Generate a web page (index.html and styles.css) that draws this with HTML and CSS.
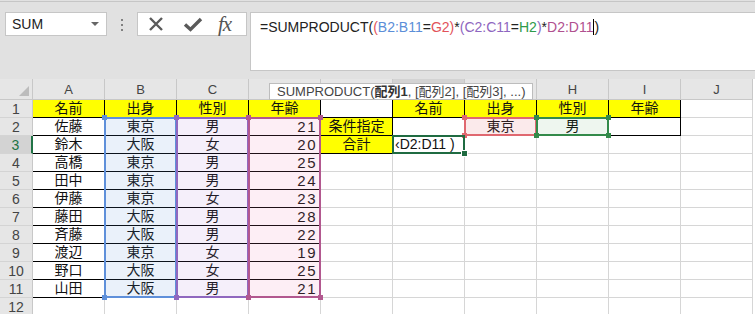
FILE: index.html
```html
<!DOCTYPE html>
<html lang="ja">
<head>
    <meta charset="UTF-8">
    <title>SUMPRODUCT</title>
    <link rel="stylesheet" href="styles.css">
</head>
<body>

    <!-- 数式バー -->
    <div class="toolbar">
        <div class="namebox"><span>SUM</span><span class="caret"></span></div>
        <div class="grip"><i></i><i></i><i></i></div>
        <div class="btns">
            <svg class="ico" width="18" height="18" viewBox="0 0 18 18"><path d="M3 3 L15 15 M15 3 L3 15" stroke="#5a5a5a" stroke-width="2.4" fill="none"/></svg>
            <svg class="ico ok" width="20" height="18" viewBox="0 0 20 18"><path d="M2 9.5 L7.5 14.5 L18 4" stroke="#5a5a5a" stroke-width="3.4" fill="none"/></svg>
            <span class="fx">fx</span>
        </div>
        <div class="formula">=SUMPRODUCT(<span class="red">(</span><span class="blue">B2:B11</span>=<span class="red">G2)</span>*<span class="purple">(C2:C11</span>=<span class="green">H2</span><span class="purple">)</span>*<span class="pink">D2:D11</span><span class="cursor">)</span></div>
    </div>

    <!-- シート -->
    <div class="sheet">
        <div class="grid">
            <div class="hd corner"><span class="tri"></span></div>
            <div class="hd">A</div><div class="hd">B</div><div class="hd">C</div><div class="hd">D</div><div class="hd">E</div>
            <div class="hd on">F</div><div class="hd">G</div><div class="hd">H</div><div class="hd">I</div><div class="hd">J</div>

            <div class="rh">1</div>
            <div class="c y k">名前</div><div class="c y k">出身</div><div class="c y k">性別</div><div class="c y k">年齢</div>
            <div class="c k"></div>
            <div class="c y k">名前</div><div class="c y k">出身</div><div class="c y k">性別</div><div class="c y k">年齢</div><div class="c"></div>

            <div class="rh">2</div>
            <div class="c k">佐藤</div><div class="c k">東京</div><div class="c k">男</div><div class="c k n">21</div>
            <div class="c y k">条件指定</div>
            <div class="c k"></div><div class="c k">東京</div><div class="c k">男</div><div class="c k"></div><div class="c"></div>

            <div class="rh on">3</div>
            <div class="c k">鈴木</div><div class="c k">大阪</div><div class="c k">女</div><div class="c k n">20</div>
            <div class="c y k">合計</div>
            <div class="c l">‹D2:D11 )</div><div class="c"></div><div class="c"></div><div class="c"></div><div class="c"></div>

            <div class="rh">4</div>
            <div class="c k">高橋</div><div class="c k">東京</div><div class="c k">男</div><div class="c k n">25</div>
            <div class="c"></div><div class="c"></div><div class="c"></div><div class="c"></div><div class="c"></div><div class="c"></div>

            <div class="rh">5</div>
            <div class="c k">田中</div><div class="c k">東京</div><div class="c k">男</div><div class="c k n">24</div>
            <div class="c"></div><div class="c"></div><div class="c"></div><div class="c"></div><div class="c"></div><div class="c"></div>

            <div class="rh">6</div>
            <div class="c k">伊藤</div><div class="c k">東京</div><div class="c k">女</div><div class="c k n">23</div>
            <div class="c"></div><div class="c"></div><div class="c"></div><div class="c"></div><div class="c"></div><div class="c"></div>

            <div class="rh">7</div>
            <div class="c k">藤田</div><div class="c k">大阪</div><div class="c k">男</div><div class="c k n">28</div>
            <div class="c"></div><div class="c"></div><div class="c"></div><div class="c"></div><div class="c"></div><div class="c"></div>

            <div class="rh">8</div>
            <div class="c k">斉藤</div><div class="c k">大阪</div><div class="c k">男</div><div class="c k n">22</div>
            <div class="c"></div><div class="c"></div><div class="c"></div><div class="c"></div><div class="c"></div><div class="c"></div>

            <div class="rh">9</div>
            <div class="c k">渡辺</div><div class="c k">東京</div><div class="c k">女</div><div class="c k n">19</div>
            <div class="c"></div><div class="c"></div><div class="c"></div><div class="c"></div><div class="c"></div><div class="c"></div>

            <div class="rh">10</div>
            <div class="c k">野口</div><div class="c k">大阪</div><div class="c k">女</div><div class="c k n">25</div>
            <div class="c"></div><div class="c"></div><div class="c"></div><div class="c"></div><div class="c"></div><div class="c"></div>

            <div class="rh">11</div>
            <div class="c k">山田</div><div class="c k">大阪</div><div class="c k">男</div><div class="c k n">21</div>
            <div class="c"></div><div class="c"></div><div class="c"></div><div class="c"></div><div class="c"></div><div class="c"></div>

            <div class="rh">12</div>
            <div class="c"></div><div class="c"></div><div class="c"></div><div class="c"></div><div class="c"></div>
            <div class="c"></div><div class="c"></div><div class="c"></div><div class="c"></div><div class="c"></div>
        </div>

        <!-- 参照範囲の色枠（セルの上に重ねる） -->
        <div class="grid marks">
            <div class="rng r-blue"><i class="tl"></i><i class="tr"></i><i class="bl"></i><i class="br"></i></div>
            <div class="rng r-purple"><i class="tl"></i><i class="tr"></i><i class="bl"></i><i class="br"></i></div>
            <div class="rng r-pink"><i class="tl"></i><i class="tr"></i><i class="bl"></i><i class="br"></i></div>
            <div class="rng r-red"><i class="tl"></i><i class="tr"></i><i class="bl"></i><i class="br"></i></div>
            <div class="rng r-green"><i class="tl"></i><i class="tr"></i><i class="bl"></i><i class="br"></i></div>
            <div class="active"><i class="br"></i></div>
        </div>

        <!-- 関数ヒント -->
        <div class="tip">SUMPRODUCT(<b>配列1</b>, [配列2], [配列3], ...)</div>
    </div>

</body>
</html>
```

FILE: styles.css
```css
/* 基本 */
html, body {
    margin: 0;
    padding: 0;
    height: 314px;
    overflow: hidden;
    background: #e1e1e1;
    font-family: "Liberation Sans", "Noto Sans CJK JP", sans-serif;
    color: #222;
}

/* 数式バー */
.toolbar {
    display: flex;
    align-items: flex-start;
    margin-top: 1px;
    border-top: 1px solid #c6c6c6;
    padding: 10px 0 8px 5px;
}
.namebox {
    width: 102px;
    height: 24px;
    box-sizing: border-box;
    background: #fff;
    border: 1px solid #c6c6c6;
    display: flex;
    align-items: center;
    justify-content: space-between;
    padding: 0 7px 0 6px;
    font-size: 14px;
}
.caret {
    width: 0;
    height: 0;
    border-left: 4px solid transparent;
    border-right: 4px solid transparent;
    border-top: 4px solid #666;
}
.grip {
    display: flex;
    flex-direction: column;
    gap: 3px;
    width: 2px;
    margin: 7px 14px 0 14px;
}
.grip i {
    display: block;
    width: 2px;
    height: 2px;
    background: #808080;
}
.btns {
    width: 110px;
    height: 24px;
    box-sizing: border-box;
    background: #fff;
    border: 1px solid #c6c6c6;
    display: flex;
    align-items: center;
    padding-left: 9px;
}
.ico { display: block; }
.ok { margin-left: 18px; }
.fx {
    margin-left: 15px;
    font-family: "Liberation Serif", serif;
    font-style: italic;
    font-size: 21px;
    line-height: 20px;
    color: #555;
    letter-spacing: -1px;
}
.formula {
    flex: 1;
    height: 59px;
    box-sizing: border-box;
    margin-left: 3px;
    margin-right: -2px;
    background: #fff;
    border: 1px solid #c6c6c6;
    padding: 4px 9px;
    font-size: 14px;
    line-height: 20px;
    white-space: nowrap;
}
.red { color: #e2535a; }
.blue { color: #5b8ed8; }
.purple { color: #8e66c0; }
.green { color: #2e9a4a; }
.pink { color: #b0508f; }
.cursor { border-left: 1px solid #000; }

/* シート */
.sheet {
    position: relative;
}
.grid {
    display: grid;
    grid-template-columns: 33px repeat(10, 72px);
    grid-template-rows: 21px repeat(12, 18px);
    background: #fff;
}
.marks {
    position: absolute;
    left: 0;
    top: 0;
    background: transparent;
}
.hd, .rh {
    box-sizing: border-box;
    background: #e6e6e6;
    color: #444;
    display: flex;
    align-items: center;
    justify-content: center;
    border-right: 1px solid #c8c8c8;
    border-bottom: 1px solid #c8c8c8;
}
.hd { font-size: 13px; }
.rh {
    font-size: 14px;
    border-bottom-color: #d4d4d4;
}
.hd.on {
    background: #d3d3d3;
    border-bottom: 2px solid #217346;
}
.rh.on {
    background: #d3d3d3;
    color: #217346;
    border-right: 2px solid #217346;
}
.corner {
    justify-content: flex-end;
    align-items: flex-end;
    padding: 0 3px 3px 0;
}
.tri {
    width: 0;
    height: 0;
    border-left: 10px solid transparent;
    border-bottom: 10px solid #bcbcbc;
}

/* セル */
.c {
    box-sizing: border-box;
    border-right: 1px solid #d6d6d6;
    border-bottom: 1px solid #d6d6d6;
    display: flex;
    align-items: center;
    justify-content: center;
    font-size: 14px;
    line-height: 17px;
    color: #111;
    white-space: nowrap;
    overflow: hidden;
}
.c.k {
    border-right-color: #000;
    border-bottom-color: #000;
}
.c.y { background: #ffff00; }
.c.n {
    justify-content: flex-end;
    padding-right: 3px;
    font-size: 15px;
    letter-spacing: 1.5px;
}
.c.l {
    justify-content: flex-start;
    padding-left: 2px;
    font-size: 14px;
}

/* 参照範囲 */
.rng, .active {
    position: relative;
    margin: -1px 0 0 -1px;
    border: 2px solid;
}
.rng i, .active i {
    position: absolute;
    width: 5px;
    height: 5px;
    background: currentColor;
}
.tl { left: -4px; top: -4px; }
.tr { right: -4px; top: -4px; }
.bl { left: -4px; bottom: -4px; }
.br { right: -4px; bottom: -4px; }
.r-blue {
    grid-column: 3;
    grid-row: 3 / 13;
    color: #5f90da;
    border-color: #5f90da;
    background: rgba(95, 144, 218, 0.13);
}
.r-purple {
    grid-column: 4;
    grid-row: 3 / 13;
    color: #9068bf;
    border-color: #9068bf;
    background: rgba(160, 110, 210, 0.11);
}
.r-pink {
    grid-column: 5;
    grid-row: 3 / 13;
    color: #b2588f;
    border-color: #b2588f;
    background: rgba(240, 120, 180, 0.13);
}
.r-red {
    grid-column: 8;
    grid-row: 3;
    color: #e06870;
    border-color: #e06870;
    background: rgba(224, 104, 112, 0.14);
}
.r-green {
    grid-column: 9;
    grid-row: 3;
    color: #338a4a;
    border-color: #338a4a;
    background: rgba(70, 150, 80, 0.09);
}
.active {
    grid-column: 7;
    grid-row: 4;
    color: #1f6b41;
    border-color: #1f6b41;
}
.active i { outline: 1px solid #fff; }

/* 関数ヒント */
.tip {
    position: absolute;
    left: 269px;
    top: 4px;
    height: 17px;
    box-sizing: border-box;
    padding: 0 7px;
    background: #fff;
    border: 1px solid #bdbdbd;
    font-size: 13px;
    line-height: 15px;
    color: #444;
    white-space: nowrap;
}
.tip b { color: #333; }
```
